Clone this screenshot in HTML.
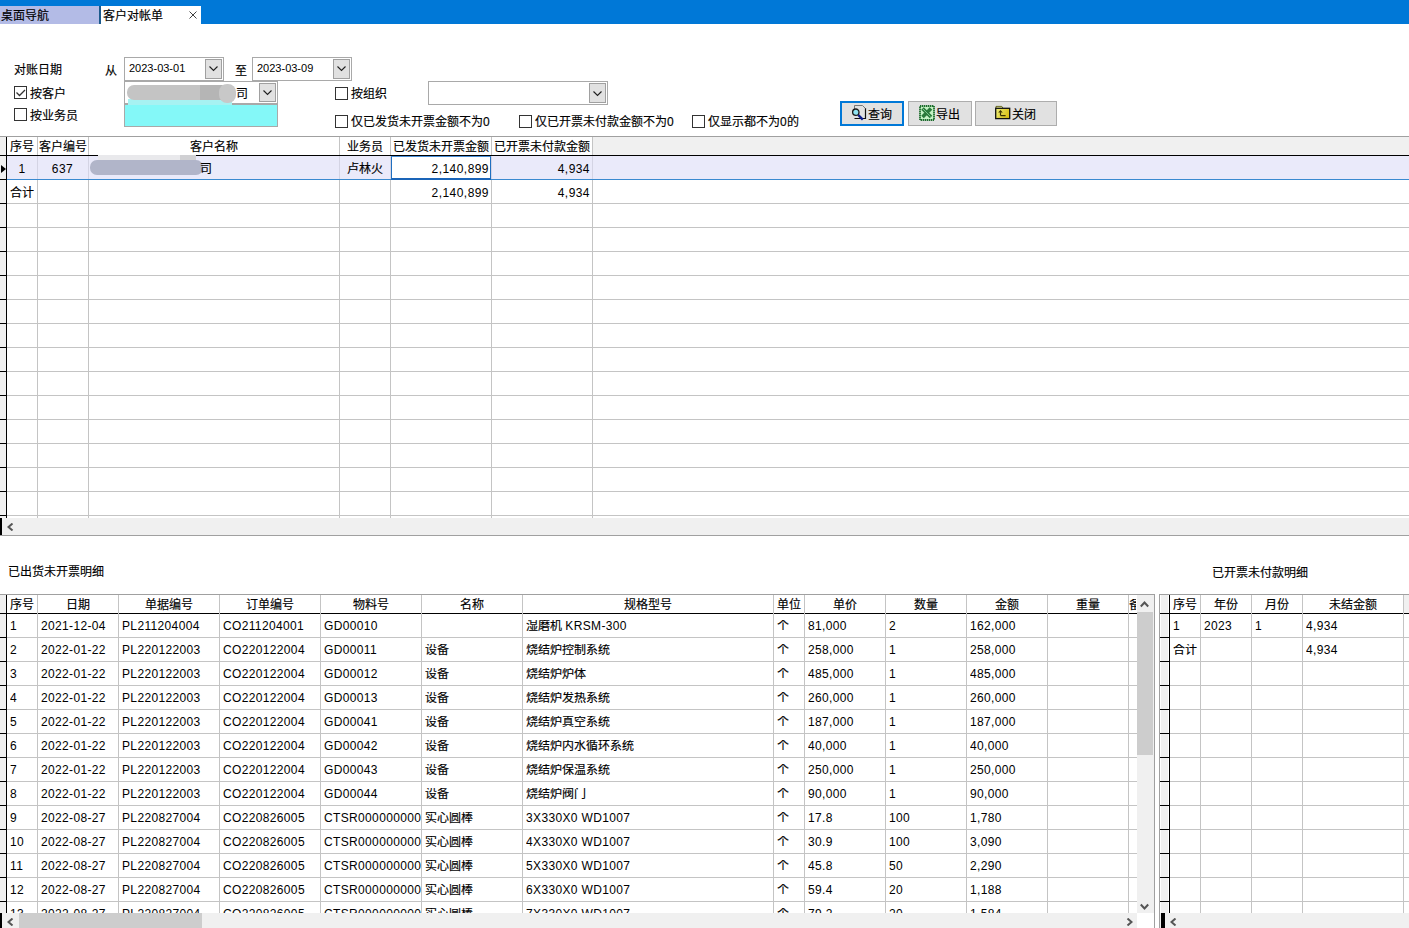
<!DOCTYPE html><html lang="zh-CN"><head><meta charset="utf-8"><style>
html,body{margin:0;padding:0}
body{width:1409px;height:928px;overflow:hidden;position:relative;background:#fff;font-family:"Liberation Sans",sans-serif;font-size:12px;color:#000}
.a{position:absolute}
.t{position:absolute;white-space:nowrap;font-size:12px;line-height:12px;-webkit-text-stroke:0.15px #000}
.l{position:absolute;white-space:nowrap;font-size:12px;line-height:12px;letter-spacing:0.45px}
.n{letter-spacing:0.35px;-webkit-text-stroke:0}
.c{position:absolute;white-space:nowrap;overflow:hidden;font-size:12px;line-height:12px;-webkit-text-stroke:0.15px #000}
</style></head><body><div class="a" style="left:0px;top:0px;width:1409px;height:24px;background:#0078d7;"></div>
<div class="a" style="left:0px;top:6px;width:99px;height:18px;background:#b3bbe6;"></div>
<div class="a" style="left:99px;top:6px;width:2px;height:18px;background:#1c5a8c;"></div>
<div class="a" style="left:101px;top:6px;width:100px;height:18px;background:#ffffff;"></div>
<div class="t" style="left:1px;top:10px;">桌面导航</div>
<div class="t" style="left:103px;top:10px;">客户对帐单</div>
<svg class="a" style="left:188px;top:10px" width="10" height="10"><path d="M1.5 1.5L8.5 8.5M8.5 1.5L1.5 8.5" stroke="#404040" stroke-width="1"/></svg>
<div class="t" style="left:14px;top:64px;">对账日期</div>
<div class="t" style="left:105px;top:65px;">从</div>
<div class="t" style="left:235px;top:65px;">至</div>
<div class="a" style="left:124px;top:57px;width:100px;height:24px;background:#fff;box-sizing:border-box;border:1px solid #a9a9a9"></div>
<div class="l" style="left:129px;top:61px;font-size:11px;line-height:14px;color:#000;letter-spacing:0">2023-03-01</div>
<div class="a" style="left:205px;top:59px;width:17px;height:20px;background:#e1e1e1;box-sizing:border-box;border:1px solid #a0a0a0"></div>
<svg class="a" style="left:209px;top:66px" width="9" height="6"><path d="M0.5 0.5L4.5 4.5L8.5 0.5" stroke="#202020" fill="none" stroke-width="1.1"/></svg>
<div class="a" style="left:252px;top:57px;width:100px;height:24px;background:#fff;box-sizing:border-box;border:1px solid #a9a9a9"></div>
<div class="l" style="left:257px;top:61px;font-size:11px;line-height:14px;color:#000;letter-spacing:0">2023-03-09</div>
<div class="a" style="left:333px;top:59px;width:17px;height:20px;background:#e1e1e1;box-sizing:border-box;border:1px solid #a0a0a0"></div>
<svg class="a" style="left:337px;top:66px" width="9" height="6"><path d="M0.5 0.5L4.5 4.5L8.5 0.5" stroke="#202020" fill="none" stroke-width="1.1"/></svg>
<div class="a" style="left:124px;top:81px;width:154px;height:23px;background:#fff;box-sizing:border-box;border:1px solid #a9a9a9"></div>
<div class="a" style="left:259px;top:83px;width:17px;height:19px;background:#e1e1e1;box-sizing:border-box;border:1px solid #a0a0a0"></div>
<svg class="a" style="left:263px;top:90px" width="9" height="6"><path d="M0.5 0.5L4.5 4.5L8.5 0.5" stroke="#202020" fill="none" stroke-width="1.1"/></svg>
<div class="t" style="left:236px;top:88px;">司</div>
<div class="a" style="left:124px;top:104px;width:154px;height:23px;background:#84f8f8;box-sizing:border-box;border:1px solid #a9a9a9"></div>
<div class="a" style="left:128px;top:99px;width:104px;height:6px;background:#a6f2f2;filter:blur(0.6px)"></div>
<div class="a" style="left:127px;top:85px;width:100px;height:15px;background:#c4c4c4;border-radius:7px 0 0 7px;filter:blur(0.5px)"></div>
<div class="a" style="left:200px;top:85px;width:22px;height:15px;background:#b5b5b5;filter:blur(0.4px)"></div>
<div class="a" style="left:219px;top:84px;width:17px;height:19px;background:#c8c8c8;border-radius:8px;filter:blur(0.5px)"></div>
<div class="a" style="left:428px;top:81px;width:180px;height:24px;background:#fff;box-sizing:border-box;border:1px solid #a9a9a9"></div>
<div class="a" style="left:589px;top:83px;width:17px;height:20px;background:#e1e1e1;box-sizing:border-box;border:1px solid #a0a0a0"></div>
<svg class="a" style="left:593px;top:91px" width="9" height="6"><path d="M0.5 0.5L4.5 4.5L8.5 0.5" stroke="#202020" fill="none" stroke-width="1.1"/></svg>
<div class="a" style="left:14px;top:86px;width:13px;height:13px;background:#fff;box-sizing:border-box;border:1px solid #333"></div>
<svg class="a" style="left:16px;top:89px" width="10" height="8"><path d="M0.5 3.5L3.5 6.5L9 1" stroke="#333" fill="none" stroke-width="1.3"/></svg>
<div class="t" style="left:30px;top:88px;">按客户</div>
<div class="a" style="left:14px;top:108px;width:13px;height:13px;background:#fff;box-sizing:border-box;border:1px solid #333"></div>
<div class="t" style="left:30px;top:110px;">按业务员</div>
<div class="a" style="left:335px;top:87px;width:13px;height:13px;background:#fff;box-sizing:border-box;border:1px solid #333"></div>
<div class="t" style="left:351px;top:88px;">按组织</div>
<div class="a" style="left:335px;top:115px;width:13px;height:13px;background:#fff;box-sizing:border-box;border:1px solid #333"></div>
<div class="t" style="left:351px;top:116px;">仅已发货未开票金额不为0</div>
<div class="a" style="left:519px;top:115px;width:13px;height:13px;background:#fff;box-sizing:border-box;border:1px solid #333"></div>
<div class="t" style="left:535px;top:116px;">仅已开票未付款金额不为0</div>
<div class="a" style="left:692px;top:115px;width:13px;height:13px;background:#fff;box-sizing:border-box;border:1px solid #333"></div>
<div class="t" style="left:708px;top:116px;">仅显示都不为0的</div>
<div class="a" style="left:840px;top:101px;width:64px;height:25px;background:#e1e1e1;box-sizing:border-box;border:2px solid #0078d7"></div>
<svg class="a" style="left:852px;top:104px" width="16" height="18">
<path d="M13.5 4V14.5H2.5" fill="none" stroke="#101010" stroke-width="1.2"/>
<path d="M2.5 5V1.5H10.5L13.5 4.5" fill="none" stroke="#777" stroke-width="1"/>
<circle cx="3.8" cy="8.2" r="3.2" fill="#8fe3f2" stroke="#1a1a1a" stroke-width="1.3"/>
<path d="M6.3 11L10.8 15.6" stroke="#0a1a8a" stroke-width="2.4"/></svg>
<div class="t" style="left:868px;top:109px;">查询</div>
<div class="a" style="left:908px;top:101px;width:64px;height:25px;background:#e1e1e1;box-sizing:border-box;border:1px solid #adadad"></div>
<svg class="a" style="left:919px;top:105px" width="16" height="16">
<rect x="1" y="1" width="14" height="14" fill="#c4f2c4" stroke="#1d6d2d" stroke-width="1.8" stroke-dasharray="1.4 0.6"/>
<path d="M3.5 3.5L12 12M12 3.5L3.5 12" stroke="#2a7a3a" stroke-width="3.6"/>
<path d="M4 4L11.5 11.5" stroke="#8fd8a0" stroke-width="0.8"/></svg>
<div class="t" style="left:936px;top:109px;">导出</div>
<div class="a" style="left:975px;top:101px;width:82px;height:25px;background:#e1e1e1;box-sizing:border-box;border:1px solid #adadad"></div>
<svg class="a" style="left:995px;top:105px" width="16" height="15">
<defs><linearGradient id="fg" x1="0" y1="0" x2="1" y2="0.3"><stop offset="0" stop-color="#eef07a"/><stop offset="1" stop-color="#dcc21a"/></linearGradient></defs>
<path d="M1 3.2V1.4H6.8L8 3.2" fill="#eef0a8" stroke="#5a5a10" stroke-width="0.9"/>
<rect x="0.7" y="3.3" width="14" height="10.3" fill="url(#fg)" stroke="#111" stroke-width="1.3"/>
<path d="M5.5 10.6V7.2M5.5 10.6H10.6" stroke="#3a3000" fill="none" stroke-width="1.2"/>
<path d="M3.2 7.6L5.5 5L7.8 7.6Z" fill="#3a3000"/></svg>
<div class="t" style="left:1012px;top:109px;">关闭</div>
<div class="a" style="left:0px;top:136px;width:1409px;height:1px;background:#a0a0a0;"></div>
<div class="a" style="left:7px;top:137px;width:586px;height:18px;background:#fff;"></div>
<div class="a" style="left:593px;top:137px;width:816px;height:18px;background:#f0f0f0;"></div>
<div class="a" style="left:0px;top:137px;width:6px;height:381px;background:#f0f0f0;"></div>
<div class="a" style="left:7px;top:156px;width:1402px;height:23px;background:#eaeafa;"></div>
<div class="a" style="left:37px;top:137px;width:1px;height:18px;background:#c4c4c4;"></div>
<div class="a" style="left:37px;top:180px;width:1px;height:338px;background:#c4c4c4;"></div>
<div class="a" style="left:37px;top:156px;width:1px;height:23px;background:#d4d4e4;"></div>
<div class="a" style="left:88px;top:137px;width:1px;height:18px;background:#c4c4c4;"></div>
<div class="a" style="left:88px;top:180px;width:1px;height:338px;background:#c4c4c4;"></div>
<div class="a" style="left:88px;top:156px;width:1px;height:23px;background:#d4d4e4;"></div>
<div class="a" style="left:339px;top:137px;width:1px;height:18px;background:#c4c4c4;"></div>
<div class="a" style="left:339px;top:180px;width:1px;height:338px;background:#c4c4c4;"></div>
<div class="a" style="left:339px;top:156px;width:1px;height:23px;background:#d4d4e4;"></div>
<div class="a" style="left:390px;top:137px;width:1px;height:18px;background:#c4c4c4;"></div>
<div class="a" style="left:390px;top:180px;width:1px;height:338px;background:#c4c4c4;"></div>
<div class="a" style="left:390px;top:156px;width:1px;height:23px;background:#d4d4e4;"></div>
<div class="a" style="left:491px;top:137px;width:1px;height:18px;background:#c4c4c4;"></div>
<div class="a" style="left:491px;top:180px;width:1px;height:338px;background:#c4c4c4;"></div>
<div class="a" style="left:491px;top:156px;width:1px;height:23px;background:#d4d4e4;"></div>
<div class="a" style="left:592px;top:137px;width:1px;height:18px;background:#c4c4c4;"></div>
<div class="a" style="left:592px;top:180px;width:1px;height:338px;background:#c4c4c4;"></div>
<div class="a" style="left:592px;top:156px;width:1px;height:23px;background:#d4d4e4;"></div>
<div class="a" style="left:7px;top:179px;width:1402px;height:1px;background:#3a8ad0;"></div>
<div class="a" style="left:0px;top:179px;width:7px;height:1px;background:#000;"></div>
<div class="a" style="left:7px;top:203px;width:1402px;height:1px;background:#c4c4c4;"></div>
<div class="a" style="left:0px;top:203px;width:7px;height:1px;background:#000;"></div>
<div class="a" style="left:7px;top:227px;width:1402px;height:1px;background:#c4c4c4;"></div>
<div class="a" style="left:0px;top:227px;width:7px;height:1px;background:#000;"></div>
<div class="a" style="left:7px;top:251px;width:1402px;height:1px;background:#c4c4c4;"></div>
<div class="a" style="left:0px;top:251px;width:7px;height:1px;background:#000;"></div>
<div class="a" style="left:7px;top:275px;width:1402px;height:1px;background:#c4c4c4;"></div>
<div class="a" style="left:0px;top:275px;width:7px;height:1px;background:#000;"></div>
<div class="a" style="left:7px;top:299px;width:1402px;height:1px;background:#c4c4c4;"></div>
<div class="a" style="left:0px;top:299px;width:7px;height:1px;background:#000;"></div>
<div class="a" style="left:7px;top:323px;width:1402px;height:1px;background:#c4c4c4;"></div>
<div class="a" style="left:0px;top:323px;width:7px;height:1px;background:#000;"></div>
<div class="a" style="left:7px;top:347px;width:1402px;height:1px;background:#c4c4c4;"></div>
<div class="a" style="left:0px;top:347px;width:7px;height:1px;background:#000;"></div>
<div class="a" style="left:7px;top:371px;width:1402px;height:1px;background:#c4c4c4;"></div>
<div class="a" style="left:0px;top:371px;width:7px;height:1px;background:#000;"></div>
<div class="a" style="left:7px;top:395px;width:1402px;height:1px;background:#c4c4c4;"></div>
<div class="a" style="left:0px;top:395px;width:7px;height:1px;background:#000;"></div>
<div class="a" style="left:7px;top:419px;width:1402px;height:1px;background:#c4c4c4;"></div>
<div class="a" style="left:0px;top:419px;width:7px;height:1px;background:#000;"></div>
<div class="a" style="left:7px;top:443px;width:1402px;height:1px;background:#c4c4c4;"></div>
<div class="a" style="left:0px;top:443px;width:7px;height:1px;background:#000;"></div>
<div class="a" style="left:7px;top:467px;width:1402px;height:1px;background:#c4c4c4;"></div>
<div class="a" style="left:0px;top:467px;width:7px;height:1px;background:#000;"></div>
<div class="a" style="left:7px;top:491px;width:1402px;height:1px;background:#c4c4c4;"></div>
<div class="a" style="left:0px;top:491px;width:7px;height:1px;background:#000;"></div>
<div class="a" style="left:7px;top:515px;width:1402px;height:1px;background:#c4c4c4;"></div>
<div class="a" style="left:0px;top:515px;width:7px;height:1px;background:#000;"></div>
<div class="a" style="left:0px;top:155px;width:1409px;height:1px;background:#000;"></div>
<div class="a" style="left:6px;top:137px;width:1px;height:381px;background:#000;"></div>
<div class="a" style="left:391px;top:156px;width:100px;height:24px;background:#fff;box-sizing:border-box;border:1px solid #1f6fc0;border-bottom:2px solid #1a64b8;border-top-color:#4a90d8"></div>
<svg class="a" style="left:1px;top:165px" width="6" height="8"><path d="M0 0L5 4L0 8Z" fill="#000"/></svg>
<div class="t" style="left:7px;top:141px;width:30px;text-align:center;">序号</div>
<div class="t" style="left:39px;top:141px;">客户编号</div>
<div class="t" style="left:88px;top:141px;width:251px;text-align:center;">客户名称</div>
<div class="t" style="left:339px;top:141px;width:51px;text-align:center;">业务员</div>
<div class="t" style="left:390px;top:141px;width:101px;text-align:center;">已发货未开票金额</div>
<div class="t" style="left:491px;top:141px;width:101px;text-align:center;">已开票未付款金额</div>
<div class="l" style="left:7px;top:163px;width:30px;text-align:center;">1</div>
<div class="l" style="left:37px;top:163px;width:51px;text-align:center;">637</div>
<div class="a" style="left:98px;top:155px;width:98px;height:5px;background:#e9e9ec;filter:blur(0.3px)"></div>
<div class="a" style="left:180px;top:155px;width:16px;height:5px;background:#d0d0d3;"></div>
<div class="a" style="left:90px;top:160px;width:113px;height:15px;background:#b1b5c9;border-radius:7px;filter:blur(0.5px)"></div>
<div class="t" style="left:200px;top:163px;">司</div>
<div class="t" style="left:339px;top:163px;width:51px;text-align:center;">卢林火</div>
<div class="l" style="left:289px;top:163px;width:200px;text-align:right;">2,140,899</div>
<div class="l" style="left:390px;top:163px;width:200px;text-align:right;">4,934</div>
<div class="t" style="left:10px;top:187px;">合计</div>
<div class="l" style="left:289px;top:187px;width:200px;text-align:right;">2,140,899</div>
<div class="l" style="left:390px;top:187px;width:200px;text-align:right;">4,934</div>
<div class="a" style="left:0px;top:518px;width:1409px;height:17px;background:#f0f0f0;"></div>
<div class="a" style="left:0px;top:518px;width:2px;height:17px;background:#000;"></div>
<svg class="a" style="left:7px;top:523px" width="7" height="8"><path d="M5.5 0.5L1.5 4L5.5 7.5" stroke="#555" fill="none" stroke-width="2"/></svg>
<div class="a" style="left:0px;top:535px;width:1409px;height:1px;background:#a0a0a0;"></div>
<div class="t" style="left:8px;top:566px;">已出货未开票明细</div>
<div class="t" style="left:1212px;top:567px;">已开票未付款明细</div>
<div class="a" style="left:0px;top:594px;width:1155px;height:1px;background:#a0a0a0;"></div>
<div class="a" style="left:1154px;top:594px;width:1px;height:334px;background:#a0a0a0;"></div>
<div class="a" style="left:7px;top:595px;width:1130px;height:18px;background:#fff;"></div>
<div class="a" style="left:0px;top:595px;width:6px;height:318px;background:#f0f0f0;"></div>
<div class="a" style="left:0px;top:613px;width:1137px;height:1px;background:#000;"></div>
<div class="a" style="left:6px;top:595px;width:1px;height:318px;background:#000;"></div>
<div class="a" style="left:7px;top:637px;width:1130px;height:1px;background:#c4c4c4;"></div>
<div class="a" style="left:0px;top:637px;width:7px;height:1px;background:#000;"></div>
<div class="a" style="left:7px;top:661px;width:1130px;height:1px;background:#c4c4c4;"></div>
<div class="a" style="left:0px;top:661px;width:7px;height:1px;background:#000;"></div>
<div class="a" style="left:7px;top:685px;width:1130px;height:1px;background:#c4c4c4;"></div>
<div class="a" style="left:0px;top:685px;width:7px;height:1px;background:#000;"></div>
<div class="a" style="left:7px;top:709px;width:1130px;height:1px;background:#c4c4c4;"></div>
<div class="a" style="left:0px;top:709px;width:7px;height:1px;background:#000;"></div>
<div class="a" style="left:7px;top:733px;width:1130px;height:1px;background:#c4c4c4;"></div>
<div class="a" style="left:0px;top:733px;width:7px;height:1px;background:#000;"></div>
<div class="a" style="left:7px;top:757px;width:1130px;height:1px;background:#c4c4c4;"></div>
<div class="a" style="left:0px;top:757px;width:7px;height:1px;background:#000;"></div>
<div class="a" style="left:7px;top:781px;width:1130px;height:1px;background:#c4c4c4;"></div>
<div class="a" style="left:0px;top:781px;width:7px;height:1px;background:#000;"></div>
<div class="a" style="left:7px;top:805px;width:1130px;height:1px;background:#c4c4c4;"></div>
<div class="a" style="left:0px;top:805px;width:7px;height:1px;background:#000;"></div>
<div class="a" style="left:7px;top:829px;width:1130px;height:1px;background:#c4c4c4;"></div>
<div class="a" style="left:0px;top:829px;width:7px;height:1px;background:#000;"></div>
<div class="a" style="left:7px;top:853px;width:1130px;height:1px;background:#c4c4c4;"></div>
<div class="a" style="left:0px;top:853px;width:7px;height:1px;background:#000;"></div>
<div class="a" style="left:7px;top:877px;width:1130px;height:1px;background:#c4c4c4;"></div>
<div class="a" style="left:0px;top:877px;width:7px;height:1px;background:#000;"></div>
<div class="a" style="left:7px;top:901px;width:1130px;height:1px;background:#c4c4c4;"></div>
<div class="a" style="left:0px;top:901px;width:7px;height:1px;background:#000;"></div>
<div class="a" style="left:37px;top:595px;width:1px;height:318px;background:#c4c4c4;"></div>
<div class="a" style="left:118px;top:595px;width:1px;height:318px;background:#c4c4c4;"></div>
<div class="a" style="left:219px;top:595px;width:1px;height:318px;background:#c4c4c4;"></div>
<div class="a" style="left:320px;top:595px;width:1px;height:318px;background:#c4c4c4;"></div>
<div class="a" style="left:421px;top:595px;width:1px;height:318px;background:#c4c4c4;"></div>
<div class="a" style="left:522px;top:595px;width:1px;height:318px;background:#c4c4c4;"></div>
<div class="a" style="left:773px;top:595px;width:1px;height:318px;background:#c4c4c4;"></div>
<div class="a" style="left:804px;top:595px;width:1px;height:318px;background:#c4c4c4;"></div>
<div class="a" style="left:885px;top:595px;width:1px;height:318px;background:#c4c4c4;"></div>
<div class="a" style="left:966px;top:595px;width:1px;height:318px;background:#c4c4c4;"></div>
<div class="a" style="left:1047px;top:595px;width:1px;height:318px;background:#c4c4c4;"></div>
<div class="a" style="left:1128px;top:595px;width:1px;height:318px;background:#c4c4c4;"></div>
<div class="t" style="left:6px;top:599px;width:31px;text-align:center;">序号</div>
<div class="t" style="left:37px;top:599px;width:81px;text-align:center;">日期</div>
<div class="t" style="left:118px;top:599px;width:101px;text-align:center;">单据编号</div>
<div class="t" style="left:219px;top:599px;width:101px;text-align:center;">订单编号</div>
<div class="t" style="left:320px;top:599px;width:101px;text-align:center;">物料号</div>
<div class="t" style="left:421px;top:599px;width:101px;text-align:center;">名称</div>
<div class="t" style="left:522px;top:599px;width:251px;text-align:center;">规格型号</div>
<div class="t" style="left:773px;top:599px;width:31px;text-align:center;">单位</div>
<div class="t" style="left:804px;top:599px;width:81px;text-align:center;">单价</div>
<div class="t" style="left:885px;top:599px;width:81px;text-align:center;">数量</div>
<div class="t" style="left:966px;top:599px;width:81px;text-align:center;">金额</div>
<div class="t" style="left:1047px;top:599px;width:81px;text-align:center;">重量</div>
<div class="t" style="left:1129px;top:599px;width:7px;overflow:hidden">备注</div>
<div class="a" style="left:0;top:614px;width:1136px;height:299px;overflow:hidden">
<div class="c" style="left:10px;top:6px;width:27px"><span class="n">1</span></div>
<div class="c" style="left:41px;top:6px;width:77px"><span class="n">2021-12-04</span></div>
<div class="c" style="left:122px;top:6px;width:97px"><span class="n">PL211204004</span></div>
<div class="c" style="left:223px;top:6px;width:97px"><span class="n">CO211204001</span></div>
<div class="c" style="left:324px;top:6px;width:97px"><span class="n">GD00010</span></div>
<div class="c" style="left:526px;top:6px;width:247px">湿磨机 <span class="n">KRSM-300</span></div>
<div class="c" style="left:777px;top:6px;width:27px">个</div>
<div class="c" style="left:808px;top:6px;width:77px"><span class="n">81,000</span></div>
<div class="c" style="left:889px;top:6px;width:77px"><span class="n">2</span></div>
<div class="c" style="left:970px;top:6px;width:77px"><span class="n">162,000</span></div>
<div class="c" style="left:10px;top:30px;width:27px"><span class="n">2</span></div>
<div class="c" style="left:41px;top:30px;width:77px"><span class="n">2022-01-22</span></div>
<div class="c" style="left:122px;top:30px;width:97px"><span class="n">PL220122003</span></div>
<div class="c" style="left:223px;top:30px;width:97px"><span class="n">CO220122004</span></div>
<div class="c" style="left:324px;top:30px;width:97px"><span class="n">GD00011</span></div>
<div class="c" style="left:425px;top:30px;width:97px">设备</div>
<div class="c" style="left:526px;top:30px;width:247px">烧结炉控制系统</div>
<div class="c" style="left:777px;top:30px;width:27px">个</div>
<div class="c" style="left:808px;top:30px;width:77px"><span class="n">258,000</span></div>
<div class="c" style="left:889px;top:30px;width:77px"><span class="n">1</span></div>
<div class="c" style="left:970px;top:30px;width:77px"><span class="n">258,000</span></div>
<div class="c" style="left:10px;top:54px;width:27px"><span class="n">3</span></div>
<div class="c" style="left:41px;top:54px;width:77px"><span class="n">2022-01-22</span></div>
<div class="c" style="left:122px;top:54px;width:97px"><span class="n">PL220122003</span></div>
<div class="c" style="left:223px;top:54px;width:97px"><span class="n">CO220122004</span></div>
<div class="c" style="left:324px;top:54px;width:97px"><span class="n">GD00012</span></div>
<div class="c" style="left:425px;top:54px;width:97px">设备</div>
<div class="c" style="left:526px;top:54px;width:247px">烧结炉炉体</div>
<div class="c" style="left:777px;top:54px;width:27px">个</div>
<div class="c" style="left:808px;top:54px;width:77px"><span class="n">485,000</span></div>
<div class="c" style="left:889px;top:54px;width:77px"><span class="n">1</span></div>
<div class="c" style="left:970px;top:54px;width:77px"><span class="n">485,000</span></div>
<div class="c" style="left:10px;top:78px;width:27px"><span class="n">4</span></div>
<div class="c" style="left:41px;top:78px;width:77px"><span class="n">2022-01-22</span></div>
<div class="c" style="left:122px;top:78px;width:97px"><span class="n">PL220122003</span></div>
<div class="c" style="left:223px;top:78px;width:97px"><span class="n">CO220122004</span></div>
<div class="c" style="left:324px;top:78px;width:97px"><span class="n">GD00013</span></div>
<div class="c" style="left:425px;top:78px;width:97px">设备</div>
<div class="c" style="left:526px;top:78px;width:247px">烧结炉发热系统</div>
<div class="c" style="left:777px;top:78px;width:27px">个</div>
<div class="c" style="left:808px;top:78px;width:77px"><span class="n">260,000</span></div>
<div class="c" style="left:889px;top:78px;width:77px"><span class="n">1</span></div>
<div class="c" style="left:970px;top:78px;width:77px"><span class="n">260,000</span></div>
<div class="c" style="left:10px;top:102px;width:27px"><span class="n">5</span></div>
<div class="c" style="left:41px;top:102px;width:77px"><span class="n">2022-01-22</span></div>
<div class="c" style="left:122px;top:102px;width:97px"><span class="n">PL220122003</span></div>
<div class="c" style="left:223px;top:102px;width:97px"><span class="n">CO220122004</span></div>
<div class="c" style="left:324px;top:102px;width:97px"><span class="n">GD00041</span></div>
<div class="c" style="left:425px;top:102px;width:97px">设备</div>
<div class="c" style="left:526px;top:102px;width:247px">烧结炉真空系统</div>
<div class="c" style="left:777px;top:102px;width:27px">个</div>
<div class="c" style="left:808px;top:102px;width:77px"><span class="n">187,000</span></div>
<div class="c" style="left:889px;top:102px;width:77px"><span class="n">1</span></div>
<div class="c" style="left:970px;top:102px;width:77px"><span class="n">187,000</span></div>
<div class="c" style="left:10px;top:126px;width:27px"><span class="n">6</span></div>
<div class="c" style="left:41px;top:126px;width:77px"><span class="n">2022-01-22</span></div>
<div class="c" style="left:122px;top:126px;width:97px"><span class="n">PL220122003</span></div>
<div class="c" style="left:223px;top:126px;width:97px"><span class="n">CO220122004</span></div>
<div class="c" style="left:324px;top:126px;width:97px"><span class="n">GD00042</span></div>
<div class="c" style="left:425px;top:126px;width:97px">设备</div>
<div class="c" style="left:526px;top:126px;width:247px">烧结炉内水循环系统</div>
<div class="c" style="left:777px;top:126px;width:27px">个</div>
<div class="c" style="left:808px;top:126px;width:77px"><span class="n">40,000</span></div>
<div class="c" style="left:889px;top:126px;width:77px"><span class="n">1</span></div>
<div class="c" style="left:970px;top:126px;width:77px"><span class="n">40,000</span></div>
<div class="c" style="left:10px;top:150px;width:27px"><span class="n">7</span></div>
<div class="c" style="left:41px;top:150px;width:77px"><span class="n">2022-01-22</span></div>
<div class="c" style="left:122px;top:150px;width:97px"><span class="n">PL220122003</span></div>
<div class="c" style="left:223px;top:150px;width:97px"><span class="n">CO220122004</span></div>
<div class="c" style="left:324px;top:150px;width:97px"><span class="n">GD00043</span></div>
<div class="c" style="left:425px;top:150px;width:97px">设备</div>
<div class="c" style="left:526px;top:150px;width:247px">烧结炉保温系统</div>
<div class="c" style="left:777px;top:150px;width:27px">个</div>
<div class="c" style="left:808px;top:150px;width:77px"><span class="n">250,000</span></div>
<div class="c" style="left:889px;top:150px;width:77px"><span class="n">1</span></div>
<div class="c" style="left:970px;top:150px;width:77px"><span class="n">250,000</span></div>
<div class="c" style="left:10px;top:174px;width:27px"><span class="n">8</span></div>
<div class="c" style="left:41px;top:174px;width:77px"><span class="n">2022-01-22</span></div>
<div class="c" style="left:122px;top:174px;width:97px"><span class="n">PL220122003</span></div>
<div class="c" style="left:223px;top:174px;width:97px"><span class="n">CO220122004</span></div>
<div class="c" style="left:324px;top:174px;width:97px"><span class="n">GD00044</span></div>
<div class="c" style="left:425px;top:174px;width:97px">设备</div>
<div class="c" style="left:526px;top:174px;width:247px">烧结炉阀门</div>
<div class="c" style="left:777px;top:174px;width:27px">个</div>
<div class="c" style="left:808px;top:174px;width:77px"><span class="n">90,000</span></div>
<div class="c" style="left:889px;top:174px;width:77px"><span class="n">1</span></div>
<div class="c" style="left:970px;top:174px;width:77px"><span class="n">90,000</span></div>
<div class="c" style="left:10px;top:198px;width:27px"><span class="n">9</span></div>
<div class="c" style="left:41px;top:198px;width:77px"><span class="n">2022-08-27</span></div>
<div class="c" style="left:122px;top:198px;width:97px"><span class="n">PL220827004</span></div>
<div class="c" style="left:223px;top:198px;width:97px"><span class="n">CO220826005</span></div>
<div class="c" style="left:324px;top:198px;width:97px"><span class="n">CTSR000000000</span></div>
<div class="c" style="left:425px;top:198px;width:97px">实心圆棒</div>
<div class="c" style="left:526px;top:198px;width:247px"><span class="n">3X330X0 WD1007</span></div>
<div class="c" style="left:777px;top:198px;width:27px">个</div>
<div class="c" style="left:808px;top:198px;width:77px"><span class="n">17.8</span></div>
<div class="c" style="left:889px;top:198px;width:77px"><span class="n">100</span></div>
<div class="c" style="left:970px;top:198px;width:77px"><span class="n">1,780</span></div>
<div class="c" style="left:10px;top:222px;width:27px"><span class="n">10</span></div>
<div class="c" style="left:41px;top:222px;width:77px"><span class="n">2022-08-27</span></div>
<div class="c" style="left:122px;top:222px;width:97px"><span class="n">PL220827004</span></div>
<div class="c" style="left:223px;top:222px;width:97px"><span class="n">CO220826005</span></div>
<div class="c" style="left:324px;top:222px;width:97px"><span class="n">CTSR000000000</span></div>
<div class="c" style="left:425px;top:222px;width:97px">实心圆棒</div>
<div class="c" style="left:526px;top:222px;width:247px"><span class="n">4X330X0 WD1007</span></div>
<div class="c" style="left:777px;top:222px;width:27px">个</div>
<div class="c" style="left:808px;top:222px;width:77px"><span class="n">30.9</span></div>
<div class="c" style="left:889px;top:222px;width:77px"><span class="n">100</span></div>
<div class="c" style="left:970px;top:222px;width:77px"><span class="n">3,090</span></div>
<div class="c" style="left:10px;top:246px;width:27px"><span class="n">11</span></div>
<div class="c" style="left:41px;top:246px;width:77px"><span class="n">2022-08-27</span></div>
<div class="c" style="left:122px;top:246px;width:97px"><span class="n">PL220827004</span></div>
<div class="c" style="left:223px;top:246px;width:97px"><span class="n">CO220826005</span></div>
<div class="c" style="left:324px;top:246px;width:97px"><span class="n">CTSR000000000</span></div>
<div class="c" style="left:425px;top:246px;width:97px">实心圆棒</div>
<div class="c" style="left:526px;top:246px;width:247px"><span class="n">5X330X0 WD1007</span></div>
<div class="c" style="left:777px;top:246px;width:27px">个</div>
<div class="c" style="left:808px;top:246px;width:77px"><span class="n">45.8</span></div>
<div class="c" style="left:889px;top:246px;width:77px"><span class="n">50</span></div>
<div class="c" style="left:970px;top:246px;width:77px"><span class="n">2,290</span></div>
<div class="c" style="left:10px;top:270px;width:27px"><span class="n">12</span></div>
<div class="c" style="left:41px;top:270px;width:77px"><span class="n">2022-08-27</span></div>
<div class="c" style="left:122px;top:270px;width:97px"><span class="n">PL220827004</span></div>
<div class="c" style="left:223px;top:270px;width:97px"><span class="n">CO220826005</span></div>
<div class="c" style="left:324px;top:270px;width:97px"><span class="n">CTSR000000000</span></div>
<div class="c" style="left:425px;top:270px;width:97px">实心圆棒</div>
<div class="c" style="left:526px;top:270px;width:247px"><span class="n">6X330X0 WD1007</span></div>
<div class="c" style="left:777px;top:270px;width:27px">个</div>
<div class="c" style="left:808px;top:270px;width:77px"><span class="n">59.4</span></div>
<div class="c" style="left:889px;top:270px;width:77px"><span class="n">20</span></div>
<div class="c" style="left:970px;top:270px;width:77px"><span class="n">1,188</span></div>
<div class="c" style="left:10px;top:294px;width:27px"><span class="n">13</span></div>
<div class="c" style="left:41px;top:294px;width:77px"><span class="n">2022-08-27</span></div>
<div class="c" style="left:122px;top:294px;width:97px"><span class="n">PL220827004</span></div>
<div class="c" style="left:223px;top:294px;width:97px"><span class="n">CO220826005</span></div>
<div class="c" style="left:324px;top:294px;width:97px"><span class="n">CTSR000000000</span></div>
<div class="c" style="left:425px;top:294px;width:97px">实心圆棒</div>
<div class="c" style="left:526px;top:294px;width:247px"><span class="n">7X330X0 WD1007</span></div>
<div class="c" style="left:777px;top:294px;width:27px">个</div>
<div class="c" style="left:808px;top:294px;width:77px"><span class="n">79.2</span></div>
<div class="c" style="left:889px;top:294px;width:77px"><span class="n">20</span></div>
<div class="c" style="left:970px;top:294px;width:77px"><span class="n">1,584</span></div>
</div>
<div class="a" style="left:1137px;top:595px;width:17px;height:318px;background:#f0f0f0;"></div>
<div class="a" style="left:1137px;top:612px;width:16px;height:143px;background:#cdcdcd;"></div>
<svg class="a" style="left:1140px;top:601px" width="9" height="7"><path d="M0.8 5.5L4.5 1.5L8.2 5.5" stroke="#555" fill="none" stroke-width="2"/></svg>
<svg class="a" style="left:1140px;top:903px" width="9" height="7"><path d="M0.8 1.5L4.5 5.5L8.2 1.5" stroke="#555" fill="none" stroke-width="2"/></svg>
<div class="a" style="left:0px;top:913px;width:1137px;height:15px;background:#f0f0f0;"></div>
<div class="a" style="left:0px;top:913px;width:2px;height:15px;background:#000;"></div>
<div class="a" style="left:19px;top:913px;width:183px;height:15px;background:#cdcdcd;"></div>
<svg class="a" style="left:7px;top:918px" width="7" height="8"><path d="M5.5 0.5L1.5 4L5.5 7.5" stroke="#555" fill="none" stroke-width="2"/></svg>
<svg class="a" style="left:1126px;top:918px" width="7" height="8"><path d="M1.5 0.5L5.5 4L1.5 7.5" stroke="#555" fill="none" stroke-width="2"/></svg>
<div class="a" style="left:1137px;top:913px;width:17px;height:15px;background:#fff;"></div>
<div class="a" style="left:1159px;top:594px;width:1px;height:334px;background:#a0a0a0;"></div>
<div class="a" style="left:1159px;top:594px;width:250px;height:1px;background:#a0a0a0;"></div>
<div class="a" style="left:1170px;top:595px;width:234px;height:18px;background:#fff;"></div>
<div class="a" style="left:1404px;top:595px;width:5px;height:18px;background:#f0f0f0;"></div>
<div class="a" style="left:1161px;top:595px;width:7px;height:318px;background:#f0f0f0;"></div>
<div class="a" style="left:1160px;top:613px;width:249px;height:1px;background:#000;"></div>
<div class="a" style="left:1169px;top:595px;width:1px;height:318px;background:#000;"></div>
<div class="a" style="left:1170px;top:637px;width:239px;height:1px;background:#c4c4c4;"></div>
<div class="a" style="left:1160px;top:637px;width:10px;height:1px;background:#000;"></div>
<div class="a" style="left:1170px;top:661px;width:239px;height:1px;background:#c4c4c4;"></div>
<div class="a" style="left:1160px;top:661px;width:10px;height:1px;background:#000;"></div>
<div class="a" style="left:1170px;top:685px;width:239px;height:1px;background:#c4c4c4;"></div>
<div class="a" style="left:1160px;top:685px;width:10px;height:1px;background:#000;"></div>
<div class="a" style="left:1170px;top:709px;width:239px;height:1px;background:#c4c4c4;"></div>
<div class="a" style="left:1160px;top:709px;width:10px;height:1px;background:#000;"></div>
<div class="a" style="left:1170px;top:733px;width:239px;height:1px;background:#c4c4c4;"></div>
<div class="a" style="left:1160px;top:733px;width:10px;height:1px;background:#000;"></div>
<div class="a" style="left:1170px;top:757px;width:239px;height:1px;background:#c4c4c4;"></div>
<div class="a" style="left:1160px;top:757px;width:10px;height:1px;background:#000;"></div>
<div class="a" style="left:1170px;top:781px;width:239px;height:1px;background:#c4c4c4;"></div>
<div class="a" style="left:1160px;top:781px;width:10px;height:1px;background:#000;"></div>
<div class="a" style="left:1170px;top:805px;width:239px;height:1px;background:#c4c4c4;"></div>
<div class="a" style="left:1160px;top:805px;width:10px;height:1px;background:#000;"></div>
<div class="a" style="left:1170px;top:829px;width:239px;height:1px;background:#c4c4c4;"></div>
<div class="a" style="left:1160px;top:829px;width:10px;height:1px;background:#000;"></div>
<div class="a" style="left:1170px;top:853px;width:239px;height:1px;background:#c4c4c4;"></div>
<div class="a" style="left:1160px;top:853px;width:10px;height:1px;background:#000;"></div>
<div class="a" style="left:1170px;top:877px;width:239px;height:1px;background:#c4c4c4;"></div>
<div class="a" style="left:1160px;top:877px;width:10px;height:1px;background:#000;"></div>
<div class="a" style="left:1170px;top:901px;width:239px;height:1px;background:#c4c4c4;"></div>
<div class="a" style="left:1160px;top:901px;width:10px;height:1px;background:#000;"></div>
<div class="a" style="left:1200px;top:595px;width:1px;height:318px;background:#c4c4c4;"></div>
<div class="a" style="left:1251px;top:595px;width:1px;height:318px;background:#c4c4c4;"></div>
<div class="a" style="left:1302px;top:595px;width:1px;height:318px;background:#c4c4c4;"></div>
<div class="a" style="left:1403px;top:595px;width:1px;height:318px;background:#c4c4c4;"></div>
<div class="t" style="left:1169px;top:599px;width:31px;text-align:center;">序号</div>
<div class="t" style="left:1200px;top:599px;width:51px;text-align:center;">年份</div>
<div class="t" style="left:1251px;top:599px;width:51px;text-align:center;">月份</div>
<div class="t" style="left:1302px;top:599px;width:101px;text-align:center;">未结金额</div>
<div class="c" style="left:1173px;top:620px;width:27px"><span class="n">1</span></div>
<div class="c" style="left:1204px;top:620px;width:47px"><span class="n">2023</span></div>
<div class="c" style="left:1255px;top:620px;width:47px"><span class="n">1</span></div>
<div class="c" style="left:1306px;top:620px;width:97px"><span class="n">4,934</span></div>
<div class="c" style="left:1173px;top:644px;width:27px">合计</div>
<div class="c" style="left:1306px;top:644px;width:97px"><span class="n">4,934</span></div>
<div class="a" style="left:1160px;top:913px;width:249px;height:15px;background:#f0f0f0;"></div>
<div class="a" style="left:1161px;top:913px;width:4px;height:15px;background:#000;"></div>
<svg class="a" style="left:1170px;top:918px" width="7" height="8"><path d="M5.5 0.5L1.5 4L5.5 7.5" stroke="#555" fill="none" stroke-width="2"/></svg></body></html>
